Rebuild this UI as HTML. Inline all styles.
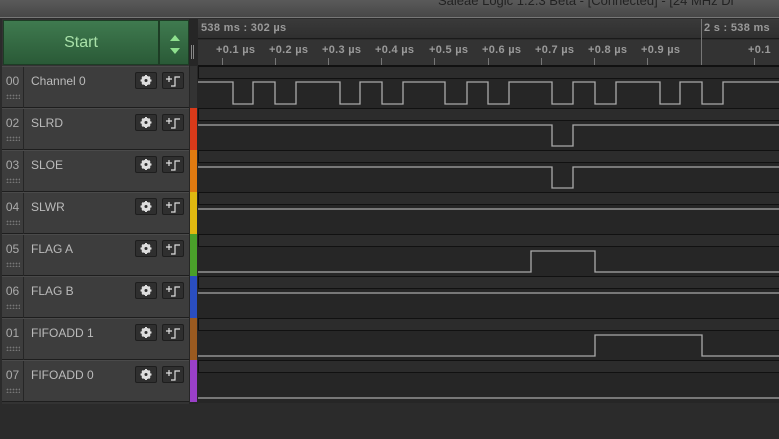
<!DOCTYPE html>
<html><head><meta charset="utf-8"><style>
*{margin:0;padding:0;box-sizing:border-box}
body{width:779px;height:439px;overflow:hidden;background:#2b2b2b;font-family:"Liberation Sans","DejaVu Sans",sans-serif;position:relative}
.top{position:absolute;left:0;top:0;width:779px;height:18px;background:linear-gradient(#5a5a5a,#474747);border-bottom:1px solid #777}
.title{position:absolute;left:438px;top:-7px;color:#222;font-size:13px;white-space:nowrap}
.left{position:absolute;left:2px;top:19px;width:188px;height:385px;background:#333}
.start{position:absolute;left:3px;top:20px;width:156px;height:45px;background:linear-gradient(#3f7a4f,#2a5a37);color:#a8e0a8;font-size:16px;text-align:center;line-height:44px;border:1px solid #1d3d25}
.arr{position:absolute;left:159px;top:20px;width:30px;height:45px;background:linear-gradient(#3f7a4f,#2a5a37);border:1px solid #1d3d25}
.row{position:absolute;left:2px;width:187px;height:42px;background:#3d3d3d;border-bottom:1px solid #1e1e1e;border-top:1px solid #4a4a4a}
.num{position:absolute;left:0;top:0;width:22px;height:41px;border-right:1px solid #262626;color:#aaa;font-size:12px;text-align:center;padding-top:7px}
.dots{position:absolute;left:4px;top:27px;width:14px;height:5px;background-image:radial-gradient(#777 0.7px,transparent 1px);background-size:3px 3px}
.name{position:absolute;left:29px;top:7px;color:#bbb;font-size:12px}
.btn{position:absolute;top:5px;width:22px;height:17px;border:1px solid #1e1e1e;border-radius:2px;background:#2f2f2f}
.btn svg{position:absolute;left:0;top:0}
.hdr1{position:absolute;left:198px;top:19px;width:581px;height:20px;background:linear-gradient(#3a3a3a,#2f2f2f);border-bottom:1px solid #1a1a1a}
.hdr2{position:absolute;left:198px;top:40px;width:581px;height:26px;background:#333;border-bottom:1px solid #111}
.t{position:absolute;color:#9a9a9a;font-size:11px;font-weight:bold;white-space:nowrap;letter-spacing:0.3px}
</style></head><body>
<div class="top"><div class="title">Saleae Logic 1.2.3 Beta - [Connected] - [24 MHz Di</div></div>
<div class="left"></div>
<div class="start">Start</div>
<div class="arr"><svg width="30" height="45"><polygon points="15,14 10,20 20,20" fill="#8ee08e"/><polygon points="10,27 20,27 15,33" fill="#8ee08e"/></svg></div>
<div style="position:absolute;left:189px;top:19px;width:9px;height:385px;background:#262626"></div>
<div style="position:absolute;left:191px;top:45px;width:1px;height:14px;background:#888"></div>
<div style="position:absolute;left:193px;top:45px;width:1px;height:14px;background:#888"></div>
<div class="hdr1"><span class="t" style="left:3px;top:3px">538 ms : 302 µs</span><span class="t" style="left:506px;top:3px">2 s : 538 ms</span></div>
<div class="hdr2">
<span class="t" style="left:18px;top:4px">+0.1 µs</span><span class="t" style="left:71px;top:4px">+0.2 µs</span><span class="t" style="left:124px;top:4px">+0.3 µs</span><span class="t" style="left:177px;top:4px">+0.4 µs</span><span class="t" style="left:231px;top:4px">+0.5 µs</span><span class="t" style="left:284px;top:4px">+0.6 µs</span><span class="t" style="left:337px;top:4px">+0.7 µs</span><span class="t" style="left:390px;top:4px">+0.8 µs</span><span class="t" style="left:443px;top:4px">+0.9 µs</span><span class="t" style="left:550px;top:4px">+0.1</span>
</div>
<svg style="position:absolute;left:0;top:0" width="779" height="439">
<g stroke="#777" stroke-width="1">
<line x1="222.5" y1="58" x2="222.5" y2="65"/><line x1="275.5" y1="58" x2="275.5" y2="65"/><line x1="328.5" y1="58" x2="328.5" y2="65"/><line x1="381.5" y1="58" x2="381.5" y2="65"/><line x1="434.5" y1="58" x2="434.5" y2="65"/><line x1="488.5" y1="58" x2="488.5" y2="65"/><line x1="541.5" y1="58" x2="541.5" y2="65"/><line x1="594.5" y1="58" x2="594.5" y2="65"/><line x1="647.5" y1="58" x2="647.5" y2="65"/><line x1="754.5" y1="58" x2="754.5" y2="65"/>
<line x1="701.5" y1="19" x2="701.5" y2="65"/>
</g>
<rect x="198" y="66" width="581" height="337" fill="#262626"/>
<g fill="#2c2c2c" stroke="#111">
<rect x="198.5" y="66.5" width="581" height="12"/><rect x="198.5" y="108.5" width="581" height="12"/><rect x="198.5" y="150.5" width="581" height="12"/><rect x="198.5" y="192.5" width="581" height="12"/><rect x="198.5" y="234.5" width="581" height="12"/><rect x="198.5" y="276.5" width="581" height="12"/><rect x="198.5" y="318.5" width="581" height="12"/><rect x="198.5" y="360.5" width="581" height="12"/>
</g>
<g fill="none" stroke="#aaa" stroke-width="1.3">
<polyline points="198,82 233,82 233,104 253,104 253,82 275,82 275,104 296,104 296,82 340,82 340,104 360,104 360,82 382,82 382,104 403,104 403,82 445,82 445,104 467,104 467,82 488,82 488,104 509,104 509,82 552,82 552,104 573,104 573,82 595,82 595,104 616,104 616,82 660,82 660,104 680,104 680,82 702,82 702,104 723,104 723,82 779,82"/>
<polyline points="198,125 552,125 552,146 573,146 573,125 779,125"/>
<polyline points="198,167 552,167 552,188 573,188 573,167 779,167"/>
<polyline points="198,209 779,209"/>
<polyline points="198,272 531,272 531,251 595,251 595,272 779,272"/>
<polyline points="198,293 779,293"/>
<polyline points="198,356 595,356 595,335 702,335 702,356 779,356"/>
<polyline points="198,398 779,398"/>
</g>
<g>
<rect x="190" y="66" width="7" height="42" fill="#333"/>
<rect x="190" y="108" width="7" height="42" fill="#d83a1a"/>
<rect x="190" y="150" width="7" height="42" fill="#e07a10"/>
<rect x="190" y="192" width="7" height="42" fill="#e0b810"/>
<rect x="190" y="234" width="7" height="42" fill="#4aa02a"/>
<rect x="190" y="276" width="7" height="42" fill="#2a4ec0"/>
<rect x="190" y="318" width="7" height="42" fill="#9a5a20"/>
<rect x="190" y="360" width="7" height="42" fill="#9a40c8"/>
</g>
<defs>
<g id="gear"><circle cx="10" cy="7.5" r="3.6" fill="none" stroke="#ddd" stroke-width="2.2"/><g stroke="#ddd" stroke-width="2"><line x1="10" y1="2" x2="10" y2="13"/><line x1="4.5" y1="7.5" x2="15.5" y2="7.5"/><line x1="6.2" y1="3.7" x2="13.8" y2="11.3"/><line x1="13.8" y1="3.7" x2="6.2" y2="11.3"/></g><circle cx="10" cy="7.5" r="1.5" fill="#2f2f2f"/></g>
<g id="trig" fill="none" stroke="#ddd" stroke-width="1.2"><path d="M3 6H9M6 3V9"/><path d="M8 13H12V4H17"/></g>
</defs>
</svg>
<div class="row" style="top:66px"><div class="num">00<div class="dots"></div></div><div class="name">Channel 0</div><div class="btn" style="left:133px"><svg width="20" height="15"><use href="#gear"/></svg></div><div class="btn" style="left:160px"><svg width="20" height="15"><use href="#trig"/></svg></div></div>
<div class="row" style="top:108px"><div class="num">02<div class="dots"></div></div><div class="name">SLRD</div><div class="btn" style="left:133px"><svg width="20" height="15"><use href="#gear"/></svg></div><div class="btn" style="left:160px"><svg width="20" height="15"><use href="#trig"/></svg></div></div>
<div class="row" style="top:150px"><div class="num">03<div class="dots"></div></div><div class="name">SLOE</div><div class="btn" style="left:133px"><svg width="20" height="15"><use href="#gear"/></svg></div><div class="btn" style="left:160px"><svg width="20" height="15"><use href="#trig"/></svg></div></div>
<div class="row" style="top:192px"><div class="num">04<div class="dots"></div></div><div class="name">SLWR</div><div class="btn" style="left:133px"><svg width="20" height="15"><use href="#gear"/></svg></div><div class="btn" style="left:160px"><svg width="20" height="15"><use href="#trig"/></svg></div></div>
<div class="row" style="top:234px"><div class="num">05<div class="dots"></div></div><div class="name">FLAG A</div><div class="btn" style="left:133px"><svg width="20" height="15"><use href="#gear"/></svg></div><div class="btn" style="left:160px"><svg width="20" height="15"><use href="#trig"/></svg></div></div>
<div class="row" style="top:276px"><div class="num">06<div class="dots"></div></div><div class="name">FLAG B</div><div class="btn" style="left:133px"><svg width="20" height="15"><use href="#gear"/></svg></div><div class="btn" style="left:160px"><svg width="20" height="15"><use href="#trig"/></svg></div></div>
<div class="row" style="top:318px"><div class="num">01<div class="dots"></div></div><div class="name">FIFOADD 1</div><div class="btn" style="left:133px"><svg width="20" height="15"><use href="#gear"/></svg></div><div class="btn" style="left:160px"><svg width="20" height="15"><use href="#trig"/></svg></div></div>
<div class="row" style="top:360px"><div class="num">07<div class="dots"></div></div><div class="name">FIFOADD 0</div><div class="btn" style="left:133px"><svg width="20" height="15"><use href="#gear"/></svg></div><div class="btn" style="left:160px"><svg width="20" height="15"><use href="#trig"/></svg></div></div>
</body></html>
